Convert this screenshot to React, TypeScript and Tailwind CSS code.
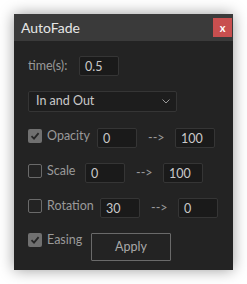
const font = { fontFamily: 'Lato, "Open Sans", Arial, sans-serif' };

function Check({ checked }: { checked: boolean }) {
  return checked ? (
    <span className="flex w-[14px] h-[14px] items-center justify-center rounded-[2px] bg-[#707070]">
      <svg width="10" height="10" viewBox="0 0 10 10">
        <path d="M1.5 5.2 L4 7.6 L8.6 2.2" fill="none" stroke="#262626" strokeWidth="1.8" />
      </svg>
    </span>
  ) : (
    <span className="block w-[14px] h-[14px] rounded-[2px] border-[1.5px] border-[#6a6a6a]" />
  );
}

function Field({ value }: { value: string }) {
  return (
    <div className="w-[40px] h-[20px] rounded-[2px] border border-[#353535] bg-[#1a1a1a] pl-[5px] text-[12.5px] leading-[19px] text-[#c9c9c9]">
      {value}
    </div>
  );
}

const rows = [
  { label: "Opacity", checked: true, from: "0", to: "100", w: "w-[50px]" },
  { label: "Scale", checked: false, from: "0", to: "100", w: "w-[38px]" },
  { label: "Rotation", checked: false, from: "30", to: "0", w: "w-[53px]" },
];

export default function App() {
  return (
    <div className="min-h-screen bg-white p-[14px]" style={font}>
      <div className="w-[219px] h-[256px] bg-[#232323] shadow-[0_0_14px_rgba(0,0,0,0.4)] flex flex-col">
        <div className="h-[27px] bg-[#3a3a3a] flex items-center justify-between pl-[7px] pr-[1px]">
          <span className="text-[14px] text-[#e6e6e6]">AutoFade</span>
          <span className="w-[19px] h-[19px] bg-[#c84f4f] flex items-center justify-center text-white text-[11px] font-bold leading-none">
            x
          </span>
        </div>

        <div className="flex flex-col pl-[14px] pt-[15px]">
          <div className="flex items-center h-[20px]">
            <span className="text-[12.5px] text-[#9a9a9a] w-[51px]">time(s):</span>
            <Field value="0.5" />
          </div>

          <div className="mt-[15px] w-[149px] h-[21px] rounded-[2px] border border-[#353535] bg-[#1d1d1d] flex items-center justify-between pl-[7px] pr-[6px]">
            <span className="text-[12.5px] text-[#c9c9c9]">In and Out</span>
            <svg width="8" height="5" viewBox="0 0 8 5">
              <path d="M0.5 0.5 L4 4 L7.5 0.5" fill="none" stroke="#9a9a9a" strokeWidth="1" />
            </svg>
          </div>

          {rows.map((r, i) => (
            <div key={r.label} className={`flex items-start h-[20px] ${i === 0 ? "mt-[16px]" : "mt-[15px]"}`}>
              <div className="flex items-center mt-[1px]">
                <Check checked={r.checked} />
                <span className={`ml-[5px] text-[12.5px] text-[#9a9a9a] leading-[14px] ${r.w}`}>{r.label}</span>
              </div>
              <Field value={r.from} />
              <span className="ml-[11px] w-[27px] text-[12.5px] text-[#9a9a9a] leading-[20px]">--&gt;</span>
              <Field value={r.to} />
            </div>
          ))}

          <div className="flex items-start mt-[15px]">
            <div className="flex items-center">
              <Check checked={true} />
              <span className="ml-[5px] w-[44px] text-[12.5px] text-[#9a9a9a] leading-[14px]">Easing</span>
            </div>
            <div className="w-[80px] h-[28px] border border-[#6a6a6a] rounded-[1px] flex items-center justify-center text-[12.5px] text-[#a9a9a9]">
              Apply
            </div>
          </div>
        </div>
      </div>
    </div>
  );
}
